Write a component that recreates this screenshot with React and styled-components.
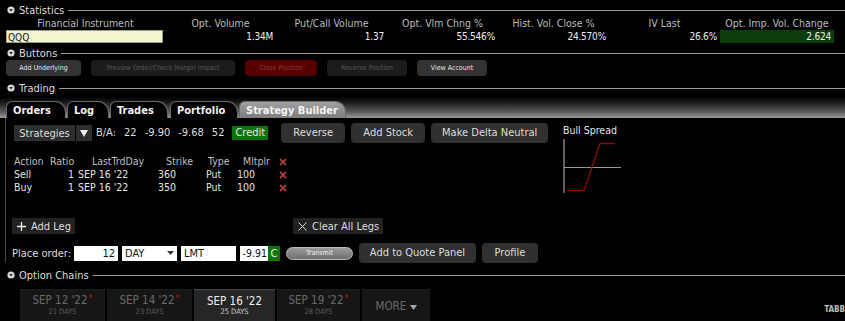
import styled, { createGlobalStyle } from 'styled-components';

const GlobalStyle = createGlobalStyle`
  html, body {
    margin: 0;
    padding: 0;
    background: #000;
  }
  body {
    font-family: "DejaVu Sans Condensed", "DejaVu Sans", sans-serif;
    color: #ddd;
  }
`;

const Page = styled.div`
  width: 845px;
  height: 321px;
  overflow: hidden;
  background: #000;
  display: flex;
  flex-direction: column;
`;

const SectionHeader = styled.div`
  display: flex;
  align-items: center;
  gap: 4px;
  height: 12px;
  margin-top: ${(p) => p.$top}px;
  padding-left: 7px;
  font-size: 11px;
  color: #ddd;

  &::after {
    content: '';
    flex: 1;
    height: 1px;
    background: #9a9a9a;
  }
`;

const StatsGrid = styled.div`
  display: grid;
  grid-template-columns: 159px repeat(5, 111px) 114px;
  padding-left: 6px;
  margin-top: 1px;
`;

const StatHead = styled.div`
  height: 13px;
  line-height: 13px;
  font-size: 10.5px;
  color: #bbb;
  text-align: center;
  white-space: nowrap;
`;

const StatValue = styled.div`
  height: 13px;
  line-height: 13px;
  font-size: 10px;
  letter-spacing: -0.2px;
  color: #eee;
  text-align: right;
  padding-right: 3px;
  background: ${(p) => (p.$green ? '#0b3c0b' : 'transparent')};
`;

const InstrumentInput = styled.div`
  width: 157px;
  height: 13px;
  line-height: 13px;
  box-sizing: border-box;
  background: #f4f4d2;
  border: 1px solid #9c9c80;
  color: #111;
  font-size: 10px;
  padding-left: 1px;
`;

const ButtonBar = styled.div`
  display: flex;
  gap: 10px;
  padding-left: 6px;
  margin-top: 1px;
`;

const barTones = {
  normal: { bg: '#333', fg: '#e6e6e6' },
  disabled: { bg: '#1c1c1c', fg: '#555' },
  danger: { bg: '#560000', fg: '#9a3a3a' },
};

const BarButton = styled.div`
  width: ${(p) => p.$w}px;
  height: 16px;
  line-height: 16px;
  border-radius: 4px;
  text-align: center;
  font-size: 7px;
  background: ${(p) => barTones[p.$tone].bg};
  color: ${(p) => barTones[p.$tone].fg};
  white-space: nowrap;
`;

const TabBar = styled.div`
  display: flex;
  align-items: flex-end;
  height: 21px;
  margin-top: 3px;
  padding-left: 6px;
  background: linear-gradient(to bottom, #000 0%, #1a1a1a 25%, #5a5a5a 70%, #999 100%);
`;

const Tab = styled.div`
  width: ${(p) => p.$w}px;
  height: 17px;
  line-height: 17px;
  box-sizing: border-box;
  margin-right: ${(p) => p.$gap}px;
  padding-left: 6px;
  font-size: 11px;
  font-weight: bold;
  border: 1px solid #6a6a6a;
  border-bottom: none;
  border-radius: 6px 11px 0 0;
  background: ${(p) => (p.$active ? 'linear-gradient(#a0a0a0, #7e7e7e)' : '#000')};
  color: ${(p) => (p.$active ? '#f4f4f4' : '#f0f0f0')};
  white-space: nowrap;
`;

const Panel = styled.div`
  display: flex;
  height: 144px;
  margin-left: 5px;
  border-left: 1px solid #4a4a4a;
`;

const MainColumn = styled.div`
  width: 542px;
  padding-left: 8px;
  display: flex;
  flex-direction: column;
`;

const ChartColumn = styled.div`
  display: flex;
  flex-direction: column;
  padding-left: 7px;
  padding-top: 5px;
`;

const ChartTitle = styled.div`
  font-size: 10.5px;
  color: #e4e4e4;
  height: 14px;
  line-height: 14px;
  margin-bottom: 1px;
`;

const StrategyRow = styled.div`
  display: flex;
  align-items: center;
  height: 21px;
  margin-top: 5px;
  font-size: 11px;
`;

const DarkBox = styled.div`
  display: flex;
  align-items: center;
  justify-content: center;
  height: 16px;
  width: ${(p) => p.$w}px;
  margin-right: ${(p) => p.$gap || 0}px;
  background: #2e2e2e;
  color: #ddd;
  font-size: 11px;
`;

const Quote = styled.div`
  display: flex;
  gap: 8px;
  margin-left: 4px;
  color: #ddd;
  white-space: nowrap;
`;

const CreditTag = styled.span`
  background: #0a760a;
  color: #e8e8e8;
  padding: 0 3px;
  height: 14px;
  line-height: 14px;
`;

const RoundButton = styled.div`
  width: ${(p) => p.$w}px;
  height: 20px;
  line-height: 20px;
  margin-left: ${(p) => p.$ml}px;
  border-radius: 4px;
  background: #303030;
  color: #ddd;
  text-align: center;
  font-size: 11px;
  white-space: nowrap;
`;

const LegTable = styled.div`
  display: grid;
  grid-template-columns: 36px 26px 80px 42px 38px 40px 14px;
  grid-auto-rows: 13px;
  margin-top: 12px;
  font-size: 10.5px;
  line-height: 13px;
`;

const Cell = styled.div`
  text-align: ${(p) => p.$align || 'left'};
  padding-left: ${(p) => p.$pl || 0}px;
  padding-right: ${(p) => p.$pr || 0}px;
  color: ${(p) => (p.$head ? '#bdbdbd' : '#e4e4e4')};
  white-space: nowrap;
`;

const RemoveMark = styled.div`
  display: flex;
  align-items: center;
  justify-content: center;
`;

const LegActions = styled.div`
  display: flex;
  align-items: center;
  margin-top: 24px;
  margin-left: -2px;
`;

const FlatButton = styled.div`
  display: flex;
  align-items: center;
  gap: 5px;
  height: 16px;
  padding: 0 4px 0 5px;
  margin-right: ${(p) => p.$gap || 0}px;
  background: #222;
  color: #ddd;
  font-size: 11px;
  white-space: nowrap;
`;

const OrderRow = styled.div`
  display: flex;
  align-items: center;
  height: 20px;
  margin-top: 9px;
  margin-left: -2px;
  font-size: 11px;
`;

const OrderLabel = styled.span`
  color: #ddd;
  margin-right: 3px;
  white-space: nowrap;
`;

const Field = styled.div`
  display: flex;
  align-items: center;
  justify-content: ${(p) => (p.$right ? 'flex-end' : 'space-between')};
  width: ${(p) => p.$w}px;
  height: 15px;
  box-sizing: border-box;
  margin-right: ${(p) => p.$gap || 0}px;
  padding: 0 ${(p) => (p.$tight ? 1 : 3)}px;
  background: #fff;
  color: #111;
  font-size: ${(p) => (p.$tight ? 10.5 : 11)}px;
  white-space: nowrap;
  overflow: hidden;
`;

const CTag = styled.div`
  width: 12px;
  height: 15px;
  line-height: 15px;
  text-align: center;
  background: #0a760a;
  color: #eee;
  font-size: 11px;
  margin-right: 6px;
`;

const Transmit = styled.div`
  width: 65px;
  height: 11px;
  line-height: 11px;
  border: 1px solid #bbb;
  border-radius: 7px;
  background: linear-gradient(#9a9a9a, #6e6e6e);
  color: #eee;
  font-size: 7px;
  text-align: center;
`;

const DateTabs = styled.div`
  display: flex;
  align-items: flex-end;
  gap: 2px;
  height: 32px;
  margin-top: 8px;
  padding-left: 20px;
`;

const DateTab = styled.div`
  display: flex;
  flex-direction: column;
  align-items: center;
  justify-content: center;
  width: ${(p) => p.$w}px;
  height: 32px;
  box-sizing: border-box;
  background: ${(p) => (p.$active ? '#262626' : '#161616')};
  border-top: 1px solid ${(p) => (p.$active ? '#444' : '#1e1e1e')};
  color: ${(p) => (p.$active ? '#f0f0f0' : '#6a6a6a')};
  font-size: 11.5px;
  line-height: 12px;
`;

const Days = styled.span`
  font-size: 7.5px;
  line-height: 10px;
  color: ${(p) => (p.$active ? '#cfcfcf' : '#5e5e5e')};
`;

const Star = styled.span`
  color: #c41e1e;
  font-size: 9px;
  position: relative;
  top: -3px;
  margin-left: 1px;
`;

const TabbedLabel = styled.div`
  margin-left: auto;
  align-self: center;
  margin-top: 8px;
  font-size: 8px;
  font-weight: bold;
  color: #bbb;
`;

function Toggle() {
  return (
    <svg width="8" height="8" viewBox="0 0 8 8">
      <circle cx="4" cy="4" r="3.6" fill="#d8d8d8" />
      <path d="M2.2 3 L5.8 3 L4 5.4 Z" fill="#222" />
    </svg>
  );
}

function Section({ title, top }) {
  return (
    <SectionHeader $top={top}>
      <Toggle />
      <span>{title}</span>
    </SectionHeader>
  );
}

function Cross() {
  return (
    <svg width="8" height="8" viewBox="0 0 8 8">
      <path d="M1 1 L7 7 M7 1 L1 7" stroke="#a63c3c" strokeWidth="1.8" />
    </svg>
  );
}

function BullSpread() {
  return (
    <svg width="60" height="56" viewBox="0 0 60 56">
      <line x1="1" y1="1" x2="1" y2="55" stroke="#bbb" strokeWidth="1" />
      <line x1="1" y1="29.5" x2="58" y2="29.5" stroke="#999" strokeWidth="1" />
      <polyline points="4,52.5 21,52.5 37,5.5 52,5.5" fill="none" stroke="#8a0a0a" strokeWidth="1.3" />
    </svg>
  );
}

const stats = [
  ['Opt. Volume', '1.34M'],
  ['Put/Call Volume', '1.37'],
  ['Opt. Vlm Chng %', '55.546%'],
  ['Hist. Vol. Close %', '24.570%'],
  ['IV Last', '26.6%'],
  ['Opt. Imp. Vol. Change', '2.624', true],
];

const legs = [
  ['Sell', '1', "SEP 16 '22", '360', 'Put', '100'],
  ['Buy', '1', "SEP 16 '22", '350', 'Put', '100'],
];

const expiries = [
  { date: "SEP 12 '22", days: '21 DAYS', w: 85, star: true },
  { date: "SEP 14 '22", days: '23 DAYS', w: 85, star: true },
  { date: "SEP 16 '22", days: '25 DAYS', w: 81, active: true },
  { date: "SEP 19 '22", days: '28 DAYS', w: 83, star: true },
];

export default function App() {
  return (
    <Page>
      <GlobalStyle />
      <Section title="Statistics" top={4} />
      <StatsGrid>
        <StatHead>Financial Instrument</StatHead>
        {stats.map(([h]) => (
          <StatHead key={h}>{h}</StatHead>
        ))}
        <InstrumentInput>QQQ</InstrumentInput>
        {stats.map(([h, v, g]) => (
          <StatValue key={h} $green={g}>
            {v}
          </StatValue>
        ))}
      </StatsGrid>

      <Section title="Buttons" top={4} />
      <ButtonBar>
        <BarButton $w={75} $tone="normal">Add Underlying</BarButton>
        <BarButton $w={144} $tone="disabled">Preview Order/Check Margin Impact</BarButton>
        <BarButton $w={72} $tone="danger">Close Position</BarButton>
        <BarButton $w={80} $tone="disabled">Reverse Position</BarButton>
        <BarButton $w={70} $tone="normal">View Account</BarButton>
      </ButtonBar>

      <Section title="Trading" top={6} />
      <TabBar>
        <Tab $w={60} $gap={1}>Orders</Tab>
        <Tab $w={42} $gap={1}>Log</Tab>
        <Tab $w={58} $gap={2}>Trades</Tab>
        <Tab $w={68} $gap={1}>Portfolio</Tab>
        <Tab $w={107} $active>Strategy Builder</Tab>
      </TabBar>

      <Panel>
        <MainColumn>
          <StrategyRow>
            <DarkBox $w={61} $gap={1}>Strategies</DarkBox>
            <DarkBox $w={16}>
              <svg width="8" height="7" viewBox="0 0 8 7">
                <path d="M0 0 H8 L4 7 Z" fill="#eee" />
              </svg>
            </DarkBox>
            <Quote>
              <span>B/A:</span>
              <span>22</span>
              <span>-9.90</span>
              <span>-9.68</span>
              <span>52</span>
              <CreditTag>Credit</CreditTag>
            </Quote>
            <RoundButton $w={64} $ml={13}>Reverse</RoundButton>
            <RoundButton $w={74} $ml={6}>Add Stock</RoundButton>
            <RoundButton $w={117} $ml={6}>Make Delta Neutral</RoundButton>
          </StrategyRow>

          <LegTable>
            <Cell $head>Action</Cell>
            <Cell $head>Ratio</Cell>
            <Cell $head $align="center" $pl={4}>LastTrdDay</Cell>
            <Cell $head $pl={10}>Strike</Cell>
            <Cell $head $pl={10}>Type</Cell>
            <Cell $head $pl={7}>Mltplr</Cell>
            <RemoveMark><Cross /></RemoveMark>
            {legs.map((leg) => (
              <>
                <Cell key={leg[0]}>{leg[0]}</Cell>
                <Cell $align="right" $pr={2}>{leg[1]}</Cell>
                <Cell $pl={2}>{leg[2]}</Cell>
                <Cell $pl={2}>{leg[3]}</Cell>
                <Cell $pl={8}>{leg[4]}</Cell>
                <Cell $pl={1}>{leg[5]}</Cell>
                <RemoveMark><Cross /></RemoveMark>
              </>
            ))}
          </LegTable>

          <LegActions>
            <FlatButton $gap={218}>
              <svg width="9" height="9" viewBox="0 0 9 9">
                <path d="M4.5 0 V9 M0 4.5 H9" stroke="#eee" strokeWidth="1.3" />
              </svg>
              Add Leg
            </FlatButton>
            <FlatButton>
              <svg width="9" height="9" viewBox="0 0 9 9">
                <path d="M0.5 0.5 L8.5 8.5 M8.5 0.5 L0.5 8.5" stroke="#ddd" strokeWidth="1" />
              </svg>
              Clear All Legs
            </FlatButton>
          </LegActions>

          <OrderRow>
            <OrderLabel>Place order:</OrderLabel>
            <Field $w={44} $gap={4} $right>12</Field>
            <Field $w={55} $gap={4}>
              DAY
              <svg width="7" height="4" viewBox="0 0 7 4">
                <path d="M0 0 H7 L3.5 4 Z" fill="#333" />
              </svg>
            </Field>
            <Field $w={55} $gap={4}>LMT</Field>
            <Field $w={28} $right $tight>-9.91</Field>
            <CTag>C</CTag>
            <Transmit>Transmit</Transmit>
            <RoundButton $w={117} $ml={6}>Add to Quote Panel</RoundButton>
            <RoundButton $w={56} $ml={6}>Profile</RoundButton>
          </OrderRow>
        </MainColumn>

        <ChartColumn>
          <ChartTitle>Bull Spread</ChartTitle>
          <BullSpread />
        </ChartColumn>
      </Panel>

      <Section title="Option Chains" top={7} />
      <DateTabs>
        {expiries.map((e) => (
          <DateTab key={e.date} $w={e.w} $active={e.active}>
            <span>
              {e.date}
              {e.star && <Star>*</Star>}
            </span>
            <Days $active={e.active}>{e.days}</Days>
          </DateTab>
        ))}
        <DateTab $w={68}>
          <span>
            MORE{' '}
            <svg width="7" height="5" viewBox="0 0 7 5">
              <path d="M0 0 H7 L3.5 5 Z" fill="#aaa" />
            </svg>
          </span>
        </DateTab>
        <TabbedLabel>TABB</TabbedLabel>
      </DateTabs>
    </Page>
  );
}
